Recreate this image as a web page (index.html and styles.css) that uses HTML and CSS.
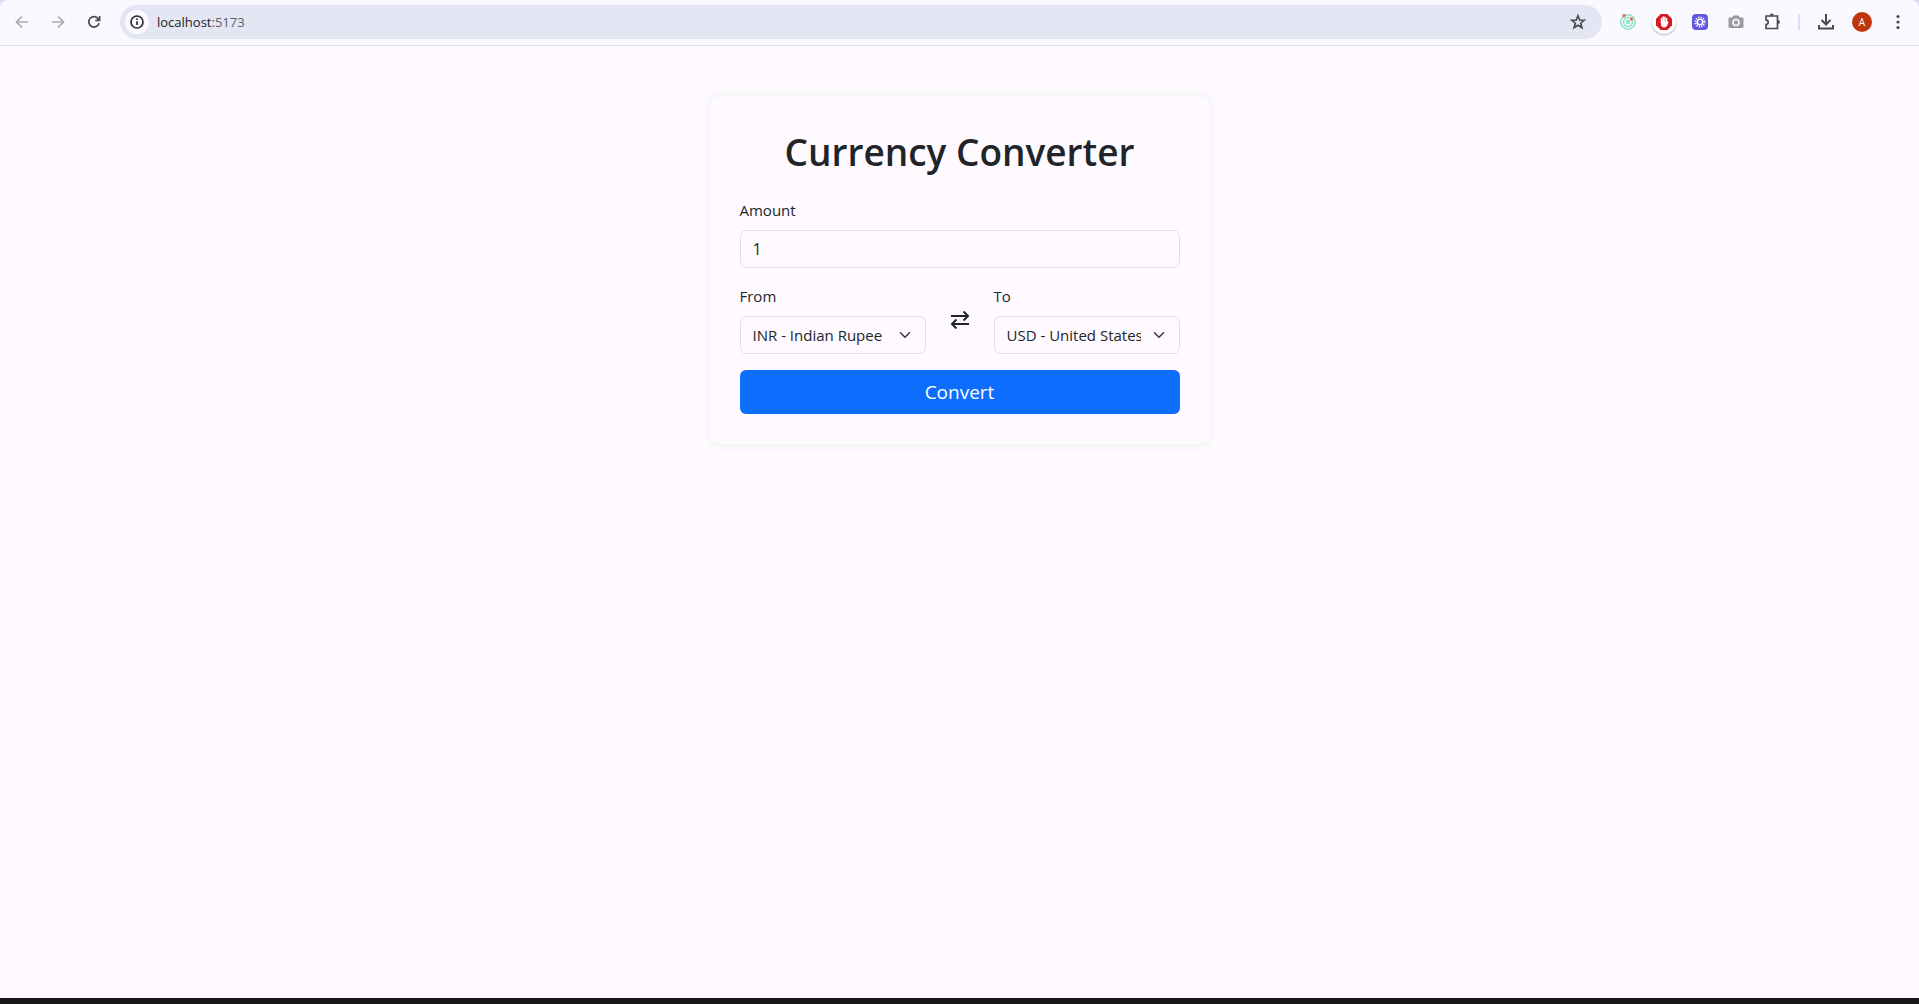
FILE: index.html
```html
<!DOCTYPE html>
<html lang="en">
<head>
<meta charset="utf-8">
<title>Currency Converter</title>
<link rel="stylesheet" href="styles.css">
</head>
<body>
<div class="window">
  <header class="toolbar">
    <button class="tool faded" aria-label="Back"><svg width="20" height="20" viewBox="0 0 20 20"><path d="M16 10H5M10 4.5L4.5 10L10 15.5"/></svg></button>
    <button class="tool faded" aria-label="Forward"><svg width="20" height="20" viewBox="0 0 20 20"><path d="M4 10H15M10 4.5L15.5 10L10 15.5"/></svg></button>
    <button class="tool" aria-label="Reload"><svg width="20" height="20" viewBox="0 0 20 20"><path d="M15 11.2A5.2 5.2 0 1 1 13.8 6.3L15.3 7.8M15.6 4V8.3H11.3"/></svg></button>
    <div class="address">
      <button class="site-info" aria-label="Site information"><svg width="16" height="16" viewBox="0 0 16 16"><circle cx="8" cy="8" r="6"/><path d="M8 7.3V11M8 4.5V6"/></svg></button>
      <a class="url" href="#">localhost<span class="port">:5173</span></a>
      <button class="star" aria-label="Bookmark"><svg width="20" height="20" viewBox="0 0 20 20"><path d="M10 3.8L11.7 8L16.2 8.3L12.7 11.2L13.9 15.6L10 13.2L6.1 15.6L7.3 11.2L3.8 8.3L8.3 8Z"/></svg></button>
    </div>
    <button class="tool" aria-label="Radar extension"><svg width="18" height="18" viewBox="0 0 18 18"><g stroke="#8be3c3" stroke-width="1.5"><circle cx="9" cy="9" r="7.2"/><circle cx="9" cy="9" r="4.4"/></g><circle cx="9" cy="9" r="2.2" fill="#8be3c3" stroke="none"/><g fill="#e0705c" stroke="none"><circle cx="5" cy="2.7" r="1.7"/><circle cx="12.5" cy="6" r="1.7"/></g></svg></button>
    <button class="tool" aria-label="Ad blocker"><span class="raised"><svg width="16" height="16" viewBox="0 0 16 16"><path fill="#d71920" stroke="none" d="M4.7 0H11.3L16 4.7V11.3L11.3 16H4.7L0 11.3V4.7Z"/><path d="M5.5 8.5V4.5M7.2 8V3M8.9 8V3.2M10.6 8.5V4.5" stroke="#fff" stroke-width="1.5" stroke-linecap="round"/><path fill="#fff" stroke="none" d="M4.8 7.5H11.3L12.7 8L10.7 12.3Q10 13.5 8 13.5Q5.8 13.5 5.1 11.5Z"/></svg></span></button>
    <button class="tool" aria-label="Loader extension"><svg width="16" height="16" viewBox="0 0 16 16"><rect width="16" height="16" rx="4" fill="#6259df" stroke="none"/><circle cx="8" cy="8" r="4.4" stroke="#fff" stroke-width="2.4" stroke-dasharray="1.1 1.2"/><circle cx="8" cy="8" r="2.6" stroke="#fff" stroke-width="1.3"/></svg></button>
    <button class="tool" aria-label="Screenshot extension"><svg width="16" height="16" viewBox="0 0 16 16"><path fill="#9b9b9f" stroke="none" d="M1.5 3.5H4.3L5.3 1.5H10.7L11.7 3.5H14.5Q15.5 3.5 15.5 4.5V13Q15.5 14 14.5 14H1.5Q.5 14 .5 13V4.5Q.5 3.5 1.5 3.5Z"/><circle cx="8" cy="8.5" r="3" fill="#9b9b9f" stroke="#fff" stroke-width="1.6"/></svg></button>
    <button class="tool" aria-label="Extensions"><svg width="20" height="20" viewBox="0 0 20 20"><path d="M4 4H15.5V16.5H4V12.5Q6.2 12.2 6.2 10.2Q6.2 8.2 4 7.8Z"/><path fill="#474a50" stroke="none" d="M7.7 3.5Q8 1.6 9.8 1.6Q11.6 1.6 11.9 3.5ZM16 8Q18 8.4 18 10Q18 11.6 16 12Z"/></svg></button>
    <span class="divider"></span>
    <button class="tool" aria-label="Downloads"><svg width="20" height="20" viewBox="0 0 20 20"><path stroke-width="2" d="M10 2V12M5.5 8L10 12.5L14.5 8M3 13V16.5H17V13"/></svg></button>
    <button class="tool" aria-label="Profile"><span class="avatar">A</span></button>
    <button class="tool" aria-label="Menu"><svg width="20" height="20" viewBox="0 0 20 20"><g fill="#474a50" stroke="none"><circle cx="10" cy="4.5" r="1.6"/><circle cx="10" cy="10" r="1.6"/><circle cx="10" cy="15.5" r="1.6"/></g></svg></button>
  </header>
  <main class="page">
    <form class="card">
      <h1 class="title">Currency Converter</h1>
      <div class="field amount">
        <label for="amount">Amount</label>
        <input class="control" id="amount" type="text" inputmode="decimal" value="1">
      </div>
      <div class="row">
        <div class="field">
          <label for="from">From</label>
          <select class="control select" id="from"><option>INR - Indian Rupee</option></select>
        </div>
        <button class="swap" type="button" aria-label="Swap currencies"><svg width="20" height="20" viewBox="0 0 20 20"><path d="M1 7H18M13.5 2.5L18 7L13.5 11.5M19 15H2M6.5 10.5L2 15L6.5 19.5"/></svg></button>
        <div class="field">
          <label for="to">To</label>
          <select class="control select" id="to"><option>USD - United States Dollar</option></select>
        </div>
      </div>
      <button class="convert" type="button">Convert</button>
    </form>
  </main>
  <footer class="strip"></footer>
</div>
</body>
</html>
```
FILE: styles.css
```css
* { box-sizing: border-box; }
body {
  margin: 0;
  background: #d9dcf5;
  color: #212529;
  font: 15px/24px "Segoe UI", "Open Sans", "Noto Sans", sans-serif;
}
button { border: 0; padding: 0; background: none; color: inherit; font: inherit; }
svg { display: block; fill: none; stroke: #474a50; stroke-width: 1.7; }

.window { min-height: 100vh; display: flex; flex-direction: column; }

.toolbar {
  display: flex;
  align-items: center;
  height: 46px;
  padding: 0 3px 2px 4px;
  background: #f9f9ff;
  border-bottom: 1px solid #e0e1ea;
  border-radius: 8px 8px 0 0;
}
.tool {
  flex: none;
  display: flex;
  align-items: center;
  justify-content: center;
  width: 36px;
  height: 36px;
}
.faded svg { stroke: #abacb2; }
.address {
  flex: 1;
  display: flex;
  align-items: center;
  gap: 8px;
  height: 34px;
  margin: 0 8px;
  padding: 0 14px 0 5px;
  border-radius: 17px;
  background: #e4e7f3;
}
.site-info {
  display: flex;
  align-items: center;
  justify-content: center;
  width: 24px;
  height: 24px;
  border-radius: 50%;
  background: #fafaff;
}
.site-info svg { stroke: #2c2e33; }
.url { flex: 1; color: #1f2126; font-size: 13px; text-decoration: none; }
.port { color: #5a5d66; }
.raised {
  display: flex;
  align-items: center;
  justify-content: center;
  width: 24px;
  height: 24px;
  border-radius: 50%;
  background: #fff;
  box-shadow: 0 1px 2px rgba(0, 0, 0, .3);
}
.divider { width: 2px; height: 16px; margin: 0 8px; background: #d5e2fb; }
.avatar {
  width: 20px;
  height: 20px;
  border-radius: 50%;
  background: #bf360c;
  color: #fff;
  font-size: 10px;
  line-height: 20px;
  text-align: center;
}

.page { flex: 1; padding: 50px 16px; background: #fefaff; }
.card {
  max-width: 500px;
  margin: 0 auto;
  padding: 30px;
  border-radius: 10px;
  background: #fefaff;
  box-shadow: 0 0 10px #e6eee5;
}
.title { margin: 0 0 20px; font-size: 37px; font-weight: 600; line-height: 52px; text-align: center; }
.field { display: flex; flex-direction: column; gap: 8px; min-width: 0; }
.amount { margin-bottom: 16px; }
.row {
  display: grid;
  grid-template-columns: 1fr 20px 1fr;
  column-gap: 24px;
  align-items: center;
  margin-bottom: 16px;
}
.control {
  width: 100%;
  height: 38px;
  padding: 6px 12px;
  border: 1px solid #dee2e6;
  border-radius: 6px;
  background: transparent;
  color: inherit;
  font: inherit;
  font-size: 16px;
}
.select {
  appearance: none;
  padding-right: 38px;
  font-size: 15px;
  background: url("data:image/svg+xml,%3Csvg xmlns='http://www.w3.org/2000/svg' viewBox='0 0 16 16'%3E%3Cpath fill='none' stroke='%23343a40' stroke-linecap='round' stroke-linejoin='round' stroke-width='2' d='m2 5 6 6 6-6'/%3E%3C/svg%3E") no-repeat right 12px center / 16px 12px;
}
.swap svg { stroke: #212529; stroke-width: 2; }
.convert {
  width: 100%;
  height: 44px;
  border-radius: 6px;
  background: #0d6efd;
  color: #fff;
  font-size: 19px;
}
.strip { height: 6px; background: #181818; }
```
